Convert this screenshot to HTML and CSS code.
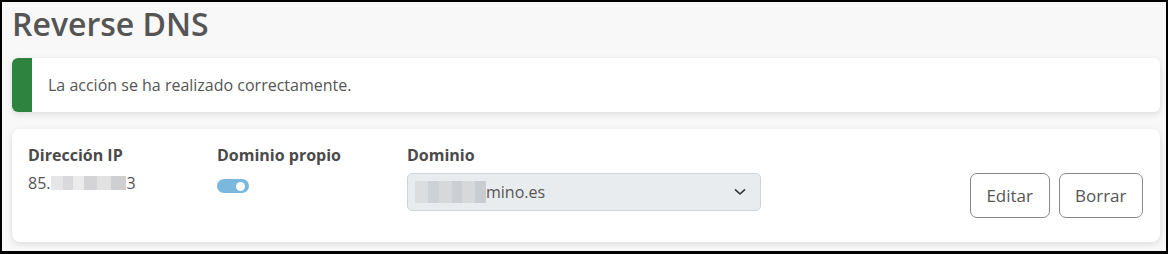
FILE: index.html
```html
<!DOCTYPE html>
<html lang="es">
<head>
<meta charset="utf-8">
<link rel="stylesheet" href="styles.css">
</head>
<body>
<div class="frame">
  <h1 class="title">Reverse DNS</h1>
  <div class="alert">
    <div class="alert-bar"></div>
    <div class="alert-text">La acción se ha realizado correctamente.</div>
  </div>
  <div class="card">
    <div class="col col-ip">
      <div class="label">Dirección IP</div>
      <div class="value">85.<span class="blur blur-ip"></span>3</div>
    </div>
    <div class="col col-own">
      <div class="label">Dominio propio</div>
      <div class="toggle"><span class="knob"></span></div>
    </div>
    <div class="col col-dom">
      <div class="label">Dominio</div>
      <div class="select">
        <span class="select-text"><span class="blur blur-dom"></span>mino.es</span>
        <svg class="chev" width="12" height="8" viewBox="0 0 12 8"><path d="M1.5 1.8 L6 6 L10.5 1.8" fill="none" stroke="#333" stroke-width="1.6" stroke-linecap="round" stroke-linejoin="round"/></svg>
      </div>
    </div>
    <div class="actions">
      <button class="btn">Editar</button>
      <button class="btn">Borrar</button>
    </div>
  </div>
</div>
</body>
</html>
```
FILE: styles.css
```css
* { box-sizing: border-box; }
html, body { margin: 0; padding: 0; }
body { font-family: "Open Sans", "Noto Sans", sans-serif; color: #555; background: #000; }
.frame {
  width: 1168px;
  height: 254px;
  border-style: solid;
  border-color: #000;
  border-width: 2px 2px 3px 2px;
  background: #f8f8f8;
  padding: 0 6px 0 10px;
  overflow: hidden;
}
.title {
  margin: 0;
  padding-top: 1px;
  font-size: 32px;
  font-weight: 600;
  line-height: 42px;
  color: #555;
  height: 56px;
}
.alert {
  display: flex;
  height: 54px;
  background: #fff;
  border-radius: 6px;
  box-shadow: 0 2px 6px rgba(0,0,0,0.12);
  overflow: hidden;
}
.alert-bar { width: 20px; background: #2e843e; }
.alert-text {
  padding-left: 16px;
  font-size: 16px;
  line-height: 54px;
  color: #555;
}
.card {
  margin-top: 17px;
  height: 113px;
  background: #fff;
  border-radius: 8px;
  box-shadow: 0 2px 6px rgba(0,0,0,0.12);
  display: flex;
  padding: 15px 17px 0 16px;
}
.col { display: flex; flex-direction: column; }
.col-ip { width: 189px; }
.col-own { width: 190px; }
.col-dom { width: 354px; }
.label {
  font-size: 16px;
  font-weight: 700;
  line-height: 22px;
  color: #4a4a4a;
}
.value {
  font-size: 16px;
  line-height: 22px;
  margin-top: 6px;
  display: flex;
  align-items: center;
  color: #555;
}
.blur {
  display: inline-block;
  background:
    linear-gradient(90deg, #e6e6e8 0 16%, #d9d9dc 16% 30%, #ebebec 30% 44%, #d4d4d6 44% 62%, #e2e2e3 62% 80%, #cfcfd1 80% 100%);
}
.blur-ip { width: 75px; height: 14px; margin: 0 1px 0 0; }
.toggle {
  margin-top: 13px;
  width: 32px;
  height: 14px;
  border-radius: 7px;
  background: #7ab8de;
  position: relative;
}
.knob {
  position: absolute;
  right: 4px;
  top: 2.5px;
  width: 9px;
  height: 9px;
  border-radius: 50%;
  background: #fff;
}
.select {
  margin-top: 7px;
  height: 38px;
  border: 1px solid #ced4da;
  border-radius: 5px;
  background: #e9ecef;
  display: flex;
  align-items: center;
  justify-content: space-between;
  padding: 0 14px 0 7px;
}
.select-text {
  display: flex;
  align-items: center;
  font-size: 16px;
  color: #555;
}
.blur-dom {
  width: 71px;
  height: 22px;
  background:
    linear-gradient(90deg, #d8dadd 0 18%, #c9ccd1 18% 34%, #d2d4d8 34% 52%, #c6c9ce 52% 66%, #d3d5d8 66% 84%, #c3c6cb 84% 100%);
  opacity: 0.85;
}
.chev { display: block; }
.actions {
  margin-left: auto;
  display: flex;
  gap: 9px;
  padding-top: 29px;
}
.btn {
  height: 45px;
  border: 1px solid #888;
  border-radius: 7px;
  background: #fff;
  font-family: "Open Sans", "Noto Sans", sans-serif;
  font-size: 17px;
  color: #555;
  padding: 0 15.5px;
}
```
